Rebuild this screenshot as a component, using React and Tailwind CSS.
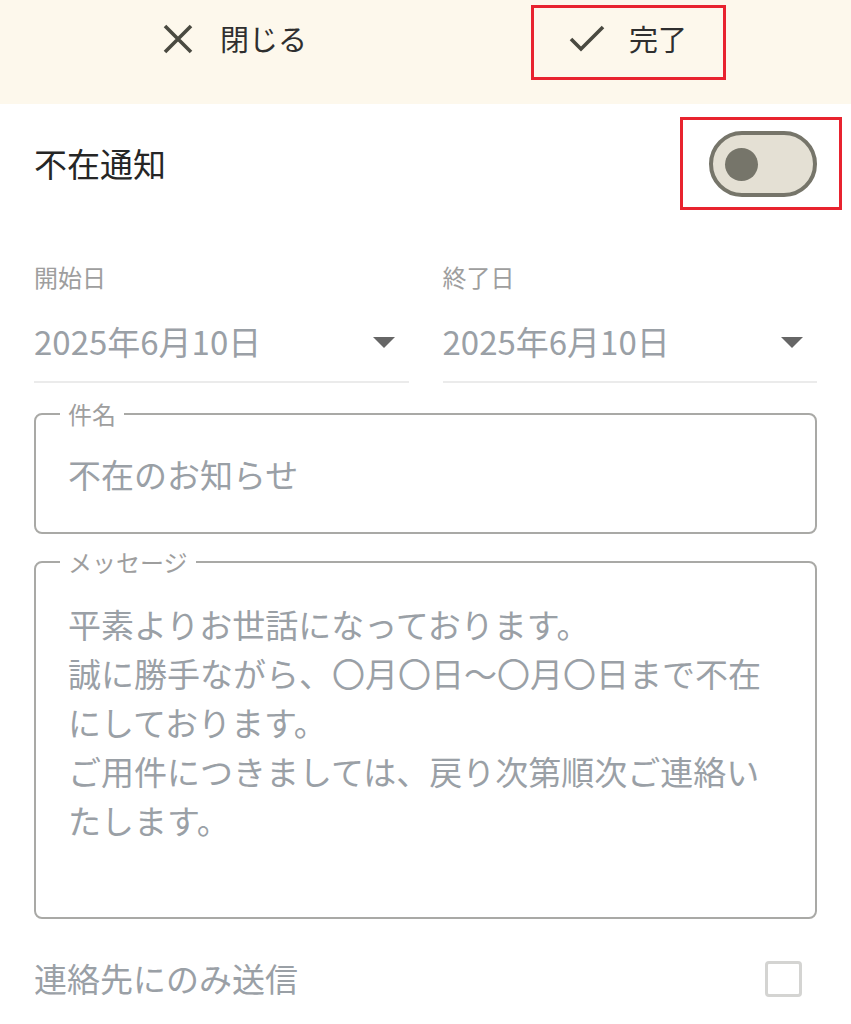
import React, { useState } from 'react';

const font = { fontFamily: '"Noto Sans CJK JP", "Noto Sans", sans-serif' };

const CloseIcon = () => (
  <svg width="30" height="30" viewBox="0 0 30 30" fill="none">
    <path d="M2 2L28 28M28 2L2 28" stroke="#4a4a41" strokeWidth="3.6" strokeLinecap="butt" />
  </svg>
);

const CheckIcon = () => (
  <svg width="36" height="28" viewBox="0 0 36 28" fill="none">
    <path d="M2 14L12 24L34 2" stroke="#4a4a41" strokeWidth="3.6" />
  </svg>
);

const Caret = () => (
  <svg width="22" height="11" viewBox="0 0 22 11">
    <path d="M0 0H22L11 11Z" fill="#666666" />
  </svg>
);

const DateField = ({ label, value }) => (
  <div className="flex flex-col">
    <span className="text-[24px] leading-[32px] text-[#9e9e9e]">{label}</span>
    <div className="mt-[24px] flex items-center justify-between border-b-2 border-[#ebebeb] pb-[16px]">
      <span className="text-[33px] leading-[48px] text-[#9aa0a6]">{value}</span>
      <span className="mr-[14px] mt-[2px]">
        <Caret />
      </span>
    </div>
  </div>
);

const App = () => {
  const [enabled, setEnabled] = useState(false);
  const [contactsOnly, setContactsOnly] = useState(false);

  const message = [
    '平素よりお世話になっております。',
    '誠に勝手ながら、〇月〇日～〇月〇日まで不在',
    'にしております。',
    'ご用件につきましては、戻り次第順次ご連絡い',
    'たします。',
  ];

  return (
    <div className="min-h-screen w-[851px] bg-white" style={font}>
      {/* Header */}
      <div className="flex h-[104px] items-start bg-[#fdf8ec]">
        <button className="ml-[163px] mt-[5px] flex h-[75px] items-center gap-[27px] pb-[8px]">
          <CloseIcon />
          <span className="text-[29px] text-[#2f2f2f]">閉じる</span>
        </button>
        <button className="ml-[224px] mt-[5px] flex h-[75px] w-[195px] items-center border-[3px] border-[#e8232f] pb-[8px] pl-[35px]">
          <CheckIcon />
          <span className="ml-[24px] text-[29px] text-[#2f2f2f]">完了</span>
        </button>
      </div>

      <div className="px-[34px]">
        {/* Toggle row */}
        <div className="flex h-[120px] items-center justify-between">
          <span className="text-[33px] text-[#262626]">不在通知</span>
          <div className="relative">
            <button
              onClick={() => setEnabled(!enabled)}
              className="flex h-[66px] w-[108px] items-center rounded-full border-4 border-[#76756a] bg-[#e4e0d4] pl-[12px]"
            >
              <span className="h-[33px] w-[33px] rounded-full bg-[#76756a]" />
            </button>
            <div className="pointer-events-none absolute -bottom-[13px] -left-[29px] -right-[25px] -top-[14px] border-[3px] border-[#e8232f]" />
          </div>
        </div>

        {/* Dates */}
        <div className="mt-[37px] grid grid-cols-2 gap-[34px]">
          <DateField label="開始日" value="2025年6月10日" />
          <DateField label="終了日" value="2025年6月10日" />
        </div>

        {/* Subject */}
        <fieldset className="mt-[19px] rounded-[8px] border-2 border-[#a9a9a6] px-[32px]">
          <legend className="-ml-[8px] px-[8px] text-[24px] leading-[24px] text-[#9e9e9e]">件名</legend>
          <div className="flex h-[106px] items-center pb-[8px] text-[33px] text-[#9aa0a6]">不在のお知らせ</div>
        </fieldset>

        {/* Message */}
        <fieldset className="mt-[16px] rounded-[8px] border-2 border-[#a9a9a6] px-[32px]">
          <legend className="-ml-[8px] px-[8px] text-[24px] leading-[24px] text-[#9e9e9e]">メッセージ</legend>
          <div className="h-[343px] pt-[26px] text-[33px] leading-[49px] text-[#9aa0a6]">
            {message.map((line) => (
              <div key={line} className="whitespace-nowrap">{line}</div>
            ))}
          </div>
        </fieldset>

        {/* Contacts only */}
        <div className="mt-[36px] flex h-[48px] items-center justify-between">
          <span className="text-[33px] text-[#9aa0a6]">連絡先にのみ送信</span>
          <button
            onClick={() => setContactsOnly(!contactsOnly)}
            className="mr-[15px] h-[36px] w-[37px] rounded-[4px] border-[3px] border-[#d4d4d2]"
          />
        </div>
      </div>
    </div>
  );
};

export default App;
